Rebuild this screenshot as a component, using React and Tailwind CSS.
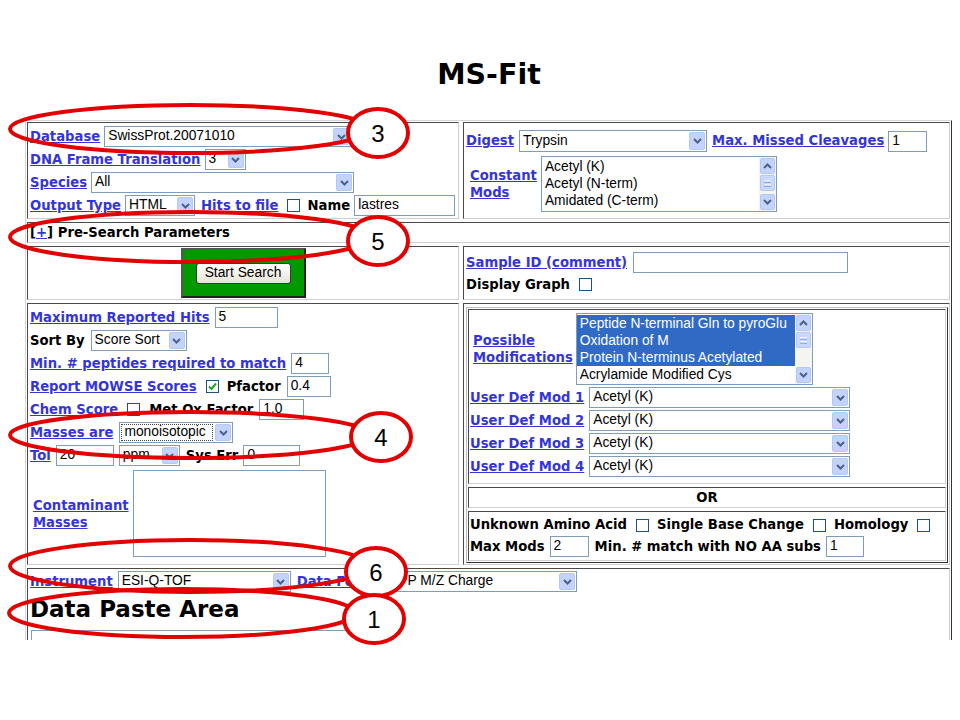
import React from "react";

const LNK = "text-[#3535d6] underline font-bold whitespace-nowrap";
const CELL =
  "border border-t-[#4a4a4a] border-l-[#4a4a4a] border-r-[#cfcfcf] border-b-[#cfcfcf] bg-white";
const CTRL = "font-['Liberation_Sans',Arial,sans-serif] text-[13.8px] text-black";

function Chevron({ up }) {
  return (
    <svg width="9" height="6" viewBox="0 0 9 6">
      <path
        d={up ? "M1 5 L4.5 1.5 L8 5" : "M1 1 L4.5 4.5 L8 1"}
        fill="none"
        stroke="#4d6185"
        strokeWidth="2"
      />
    </svg>
  );
}

function ArrowBtn({ up, className = "" }) {
  return (
    <div
      className={`flex items-center justify-center bg-[#c3d3fb] border border-[#b4c8f4] rounded-[2px] ${className}`}
    >
      <Chevron up={up} />
    </div>
  );
}

function Select({ className = "", value, dotted }) {
  return (
    <div
      className={`flex items-stretch h-[21px] bg-white border border-[#7f9db9] shrink-0 ${CTRL} ${className}`}
    >
      <div className="flex-1 flex items-center overflow-hidden whitespace-nowrap p-[1px]">
        {dotted ? (
          <span className="h-full w-full flex items-center border border-dotted border-[#444] pl-[2px]">
            {value}
          </span>
        ) : (
          <span className="pl-[2px]">{value}</span>
        )}
      </div>
      <div className="p-[1px] w-[18px]">
        <ArrowBtn className="h-full w-full" />
      </div>
    </div>
  );
}

function Input({ className = "", value }) {
  return (
    <div
      className={`h-[21px] bg-white border border-[#7f9db9] flex items-center pl-[3px] shrink-0 ${CTRL} ${className}`}
    >
      {value}
    </div>
  );
}

function Check({ checked, className = "" }) {
  return (
    <span
      className={`inline-flex w-[13px] h-[13px] border border-[#1c5180] bg-white items-center justify-center shrink-0 ${className}`}
    >
      {checked && (
        <svg width="9" height="9" viewBox="0 0 9 9">
          <path d="M1 4.5 L3.5 7 L8 1.5" fill="none" stroke="#21a121" strokeWidth="2" />
        </svg>
      )}
    </span>
  );
}

function ScrollCol() {
  return (
    <div className="w-[17px] flex flex-col bg-[#f4f4f0] p-[1px] gap-[1px]">
      <ArrowBtn up className="h-[16px] w-full" />
      <div className="h-[16px] w-full bg-[#c9d8fc] border border-[#b4c8f4] rounded-[2px] flex flex-col items-center justify-center gap-[1px]">
        <span className="block w-[7px] h-[1px] bg-[#eef3ff]" />
        <span className="block w-[7px] h-[1px] bg-[#8fb0f0]" />
        <span className="block w-[7px] h-[1px] bg-[#eef3ff]" />
        <span className="block w-[7px] h-[1px] bg-[#8fb0f0]" />
      </div>
      <div className="flex-1" />
      <ArrowBtn className="h-[16px] w-full" />
    </div>
  );
}

function Row({ children, className = "" }) {
  return <div className={`flex items-center h-[23px] ${className}`}>{children}</div>;
}

export default function App() {
  return (
    <div className="relative w-[960px] h-[720px] bg-white overflow-hidden font-['DejaVu_Sans',Verdana,sans-serif] text-[13.2px] text-black">
      {/* Title */}
      <div className="h-[120px] pt-[58px] pl-[18px] flex justify-center">
        <h1 className="text-[28.5px] leading-[34px] font-bold">MS-Fit</h1>
      </div>

      {/* Form table */}
      <div className="ml-[25px] w-[927px] h-[520px] overflow-hidden border-l border-t border-r border-l-[#d6d6d6] border-t-[#d6d6d6] border-r-[#333] p-[1px] flex flex-col gap-[3px]">
        {/* Row 1 */}
        <div className="flex gap-[4px] h-[97px] shrink-0">
          <div className={`${CELL} w-[432px] flex flex-col pl-[2px] pt-[2px]`}>
            <Row>
              <a className={LNK}>Database</a>
              <Select className="w-[247px] ml-[4px]" value="SwissProt.20071010" />
            </Row>
            <Row>
              <a className={LNK}>DNA Frame Translation</a>
              <Select className="w-[41px] ml-[4px]" value="3" />
            </Row>
            <Row>
              <a className={LNK}>Species</a>
              <Select className="w-[263px] ml-[4px]" value="All" />
            </Row>
            <Row>
              <a className={LNK}>Output Type</a>
              <Select className="w-[70px] ml-[4px]" value="HTML" />
              <a className={`${LNK} ml-[6px]`}>Hits to file</a>
              <Check className="ml-[8px]" />
              <b className="ml-[8px]">Name</b>
              <Input className="w-[101px] ml-[4px]" value="lastres" />
            </Row>
          </div>
          <div className={`${CELL} flex-1 flex flex-col justify-center pl-[2px]`}>
            <div className="flex items-center h-[24px]">
              <a className={LNK}>Digest</a>
              <Select className="w-[188px] h-[22px] ml-[5px]" value="Trypsin" />
              <a className={`${LNK} ml-[5px]`}>Max. Missed Cleavages</a>
              <Input className="w-[39px] ml-[4px]" value="1" />
            </div>
            <div className="flex items-center mt-[3px] pl-[4px]">
              <a className={`${LNK} leading-[17px]`}>
                Constant
                <br />
                Mods
              </a>
              <div className={`ml-[4px] w-[236px] h-[56px] border border-[#7f9db9] flex ${CTRL}`}>
                <div className="flex-1 pl-[3px] pt-[1px] leading-[17px]">
                  <div>Acetyl (K)</div>
                  <div>Acetyl (N-term)</div>
                  <div>Amidated (C-term)</div>
                </div>
                <ScrollCol />
              </div>
            </div>
          </div>
        </div>

        {/* Row 2 */}
        <div className={`${CELL} h-[21px] shrink-0 flex items-center pl-[2px] font-bold`}>
          [<a className="text-[#3535d6] underline">+</a>] Pre-Search Parameters
        </div>

        {/* Row 3 */}
        <div className="flex gap-[4px] h-[54px] shrink-0">
          <div className={`${CELL} w-[432px] flex items-center justify-center`}>
            <div className="w-[125px] h-[50px] bg-[#009900] border-2 border-t-[#555] border-l-[#555] border-r-[#222] border-b-[#222] flex items-center justify-center">
              <div
                className={`w-[95px] h-[21px] rounded-[3px] border border-[#2f3b47] bg-gradient-to-b from-white to-[#e6e3d6] flex items-center justify-center ${CTRL}`}
              >
                Start Search
              </div>
            </div>
          </div>
          <div className={`${CELL} flex-1 flex flex-col justify-center pl-[2px]`}>
            <Row>
              <a className={LNK}>Sample ID (comment)</a>
              <Input className="w-[215px] ml-[6px]" value="" />
            </Row>
            <div className="flex items-center h-[21px]">
              <b>Display Graph</b>
              <Check className="ml-[9px]" />
            </div>
          </div>
        </div>

        {/* Row 4 */}
        <div className="flex gap-[4px] h-[262px] shrink-0">
          <div className={`${CELL} w-[432px] flex flex-col pl-[2px] pt-[2px]`}>
            <Row>
              <a className={LNK}>Maximum Reported Hits</a>
              <Input className="w-[63px] ml-[5px]" value="5" />
            </Row>
            <Row>
              <b>Sort By</b>
              <Select className="w-[96px] ml-[6px]" value="Score Sort" />
            </Row>
            <Row>
              <a className={LNK}>Min. # peptides required to match</a>
              <Input className="w-[38px] ml-[5px]" value="4" />
            </Row>
            <Row>
              <a className={LNK}>Report MOWSE Scores</a>
              <Check checked className="ml-[9px]" />
              <b className="ml-[8px]">Pfactor</b>
              <Input className="w-[44px] ml-[6px]" value="0.4" />
            </Row>
            <Row>
              <a className={LNK}>Chem Score</a>
              <Check className="ml-[9px]" />
              <b className="ml-[9px]">Met Ox Factor</b>
              <Input className="w-[45px] ml-[6px]" value="1.0" />
            </Row>
            <Row>
              <a className={LNK}>Masses are</a>
              <Select className="w-[114px] ml-[6px]" value="monoisotopic" dotted />
            </Row>
            <Row>
              <a className={LNK}>Tol</a>
              <Input className="w-[58px] ml-[5px]" value="20" />
              <Select className="w-[61px] ml-[5px]" value="ppm" />
              <b className="ml-[6px]">Sys Err</b>
              <Input className="w-[57px] ml-[5px]" value="0" />
            </Row>
            <div className="flex items-center mt-[3px] pl-[3px]">
              <a className={`${LNK} leading-[17px]`}>
                Contaminant
                <br />
                Masses
              </a>
              <div className="ml-[4px] w-[193px] h-[87px] border border-[#7f9db9] bg-white" />
            </div>
          </div>

          <div className={`${CELL} flex-1 pl-[2px] pr-[1px] pt-[3px] pb-[1px]`}>
            <div className="h-full border border-t-[#bdbdbd] border-l-[#bdbdbd] border-r-[#333] border-b-[#333] p-[1px] flex flex-col gap-[3px]">
              <div className={`${CELL} h-[175px] shrink-0 flex flex-col pt-[2px]`}>
                <div className="flex items-center pl-[4px] h-[74px]">
                  <a className={`${LNK} leading-[17px]`}>
                    Possible
                    <br />
                    Modifications
                  </a>
                  <div className={`ml-[3px] w-[237px] h-[72px] border border-[#7f9db9] flex ${CTRL}`}>
                    <div className="flex-1 pt-[1px] leading-[17px] whitespace-nowrap overflow-hidden">
                      <div className="bg-[#316ac5] text-white pl-[3px]">Peptide N-terminal Gln to pyroGlu</div>
                      <div className="bg-[#316ac5] text-white pl-[3px]">Oxidation of M</div>
                      <div className="bg-[#316ac5] text-white pl-[3px]">Protein N-terminus Acetylated</div>
                      <div className="pl-[3px]">Acrylamide Modified Cys</div>
                    </div>
                    <ScrollCol />
                  </div>
                </div>
                {[1, 2, 3, 4].map((n) => (
                  <Row key={n} className="pl-[1px]">
                    <a className={LNK}>User Def Mod {n}</a>
                    <Select className="w-[261px] ml-[5px]" value="Acetyl (K)" />
                  </Row>
                ))}
              </div>
              <div className={`${CELL} h-[21px] shrink-0 flex items-center justify-center font-bold`}>OR</div>
              <div className={`${CELL} flex-1 flex flex-col justify-center pl-[1px]`}>
                <div className="flex items-center h-[21px]">
                  <b>Unknown Amino Acid</b>
                  <Check className="ml-[9px]" />
                  <b className="ml-[8px]">Single Base Change</b>
                  <Check className="ml-[9px]" />
                  <b className="ml-[8px]">Homology</b>
                  <Check className="ml-[9px]" />
                </div>
                <div className="flex items-center h-[22px]">
                  <b>Max Mods</b>
                  <Input className="w-[39px] ml-[5px]" value="2" />
                  <b className="ml-[6px]">Min. # match with NO AA subs</b>
                  <Input className="w-[38px] ml-[5px]" value="1" />
                </div>
              </div>
            </div>
          </div>
        </div>

        {/* Row 5 */}
        <div className={`${CELL} flex-1 flex flex-col pl-[2px] pt-[1px]`}>
          <Row>
            <a className={LNK}>Instrument</a>
            <Select className="w-[173px] ml-[5px]" value="ESI-Q-TOF" />
            <a className={`${LNK} ml-[6px]`}>Data Format</a>
            <Select className="w-[183px] ml-[5px]" value="PP M/Z Charge" />
          </Row>
          <h3 className="text-[23px] leading-[30px] font-bold mt-[1px]">Data Paste Area</h3>
          <div className="ml-[1px] mt-[6px] w-[363px] h-[120px] border border-[#7f9db9] bg-white" />
        </div>
      </div>

      {/* Annotation overlay */}
      <svg className="absolute left-0 top-0 pointer-events-none" width="960" height="720">
        <g fill="none" stroke="#e20000" strokeWidth="4">
          <ellipse cx="190" cy="129" rx="180" ry="24" />
          <ellipse cx="190" cy="237" rx="180" ry="25" />
          <ellipse cx="190" cy="435" rx="180" ry="23" />
          <ellipse cx="190" cy="566" rx="180" ry="26" />
          <ellipse cx="182" cy="613" rx="173" ry="24" />
        </g>
        <g fill="white" stroke="#e20000" strokeWidth="4">
          <ellipse cx="378" cy="133" rx="30" ry="24" />
          <ellipse cx="378" cy="241" rx="30" ry="24" />
          <ellipse cx="381" cy="437" rx="30" ry="24" />
          <ellipse cx="376" cy="572" rx="30" ry="24" />
          <ellipse cx="374" cy="619" rx="30" ry="24" />
        </g>
        <g fontFamily="Liberation Sans, Arial, sans-serif" fontSize="24" fill="#000" textAnchor="middle">
          <text x="378" y="142">3</text>
          <text x="378" y="250">5</text>
          <text x="381" y="446">4</text>
          <text x="376" y="581">6</text>
          <text x="374" y="628">1</text>
        </g>
      </svg>
    </div>
  );
}
